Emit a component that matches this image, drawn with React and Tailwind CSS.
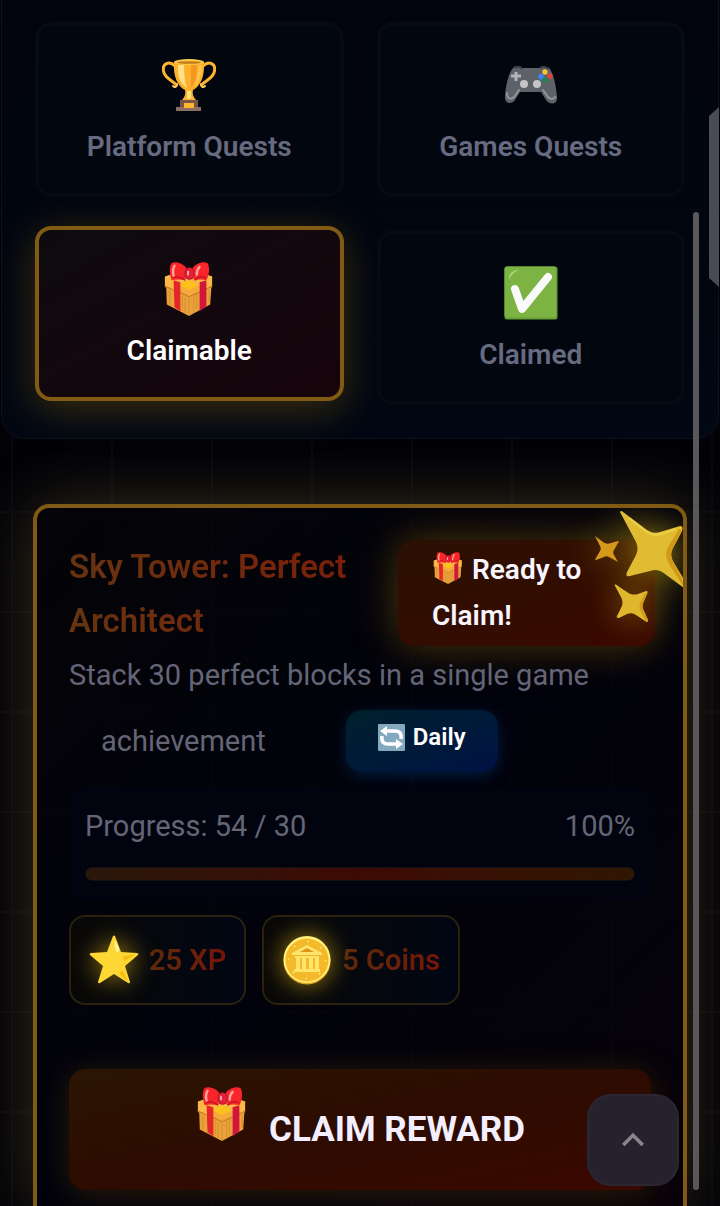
import { useState } from 'react'
import clsx from 'clsx'
import { MdKeyboardArrowUp } from 'react-icons/md'

function TrophyIcon({ className }) {
  return (
    <svg viewBox="0 0 54 54" className={className} aria-hidden="true">
      <path d="M13 8C7 2 0 6 1.500 13c1 7 8 9 13 14" stroke="#fdb52d" strokeWidth="3" fill="none" strokeLinecap="round" />
      <path d="M41 8c6-6 13-2 11.500 5-1 7-8 9-13 14" stroke="#fdb52d" strokeWidth="3" fill="none" strokeLinecap="round" />
      <path d="M15 26c0 3-2 4-4 2M39 26c0 3 2 4 4 2" stroke="#ffcb5c" strokeWidth="2" fill="none" strokeLinecap="round" />
      <path d="M12 4h30c1 13-3 24-11 28-1 3 0 7 3 10H20c3-3 4-7 3-10C15 28 11 17 12 4z" fill="#fdb02c" />
      <path d="M16 7h6c0 10 1 18 3 23-7-4-10-13-9-23z" fill="#ffe084" />
      <path d="M29 7h6c0 10-2 18-6 23z" fill="#f5971c" />
      <path d="M37 7h3c0 10-3 18-8 22 3-7 4-14 5-22z" fill="#ffc44d" />
      <path d="M25 33h4v8h-4z" fill="#ffe37d" />
      <ellipse cx="27" cy="4" rx="15" ry="3" fill="#ffca46" />
      <ellipse cx="27" cy="4.500" rx="12" ry="1.300" fill="#c27a1c" />
      <path d="M18 42h18v7h3v4H14v-4h4z" fill="#795548" />
      <path d="M14 49h25v4H14z" fill="#8d6e63" />
      <path d="M22 45h10v5H22z" fill="#ffb72e" />
    </svg>
  )
}

function GamepadIcon({ className }) {
  return (
    <svg viewBox="0 0 54 54" className={className} aria-hidden="true">
      <path d="M10 9c3-2 7-1 8 1h18c2-2 6-2 9 0 4 4 7 16 8 29 1 8-8 8-11 3l-5-8H16l-5 8c-3 5-11 4-10-4 1-12 4-25 9-29z" fill="#5d6168" />
      <path d="M11 10c3-2 6-1 7 1M36 10c3-2 6-1 8 1" stroke="#3b3e45" strokeWidth="2" fill="none" />
      <path d="M3 35c0 6 4 7 7 4l5-7M51 39c-2 3-5 2-7 0l-5-7" stroke="#92959a" strokeWidth="2" fill="none" strokeLinecap="round" />
      <path d="M12 14v9M7 18h10" stroke="#b3b5b8" strokeWidth="3" />
      <circle cx="20" cy="26" r="4" fill="#c5c5c7" />
      <circle cx="33" cy="26" r="4" fill="#c5c5c7" />
      <circle cx="41" cy="14" r="2.700" fill="#fbc02d" />
      <circle cx="46" cy="18" r="2.700" fill="#db4437" />
      <circle cx="37" cy="18.500" r="2.700" fill="#4285f4" />
      <circle cx="41" cy="22" r="2.500" fill="#128b50" />
    </svg>
  )
}

function GiftIcon({ className }) {
  return (
    <svg viewBox="0 0 54 56" className={className} aria-hidden="true">
      <path d="M3 15l24-7 24 7-2 29-22 12L4 44z" fill="#e9a13a" />
      <path d="M2 15l24-8 25 8v11l-24 9L2 26z" fill="#fbb844" />
      <path d="M17 25l10-6 11 6v5l-11 6-10-6z" fill="#f6a93b" />
      <path d="M17 24l10-5 10 5-10 5z" fill="#fcc21b" />
      <path d="M2 25l9 4M17 31l10 5 11-5M43 29l8-4" stroke="#c77c22" strokeWidth="1.2" fill="none" />
      <path d="M20 35v15M23 37v16M27 37v18M32 35v17M35 33v16M7 30v14M48 30v12" stroke="#cf872c" strokeWidth=".7" />
      <path d="M11 19l7 2v30l-6-4z" fill="#e4262c" />
      <path d="M38 21l7-2v27l-7 5z" fill="#d3153c" />
      <path d="M9 1c5-2 12 1 15 5l-1 13c-4-1-10-1-14 0-2-5-3-14 0-18z" fill="#f9252b" />
      <path d="M46 1c-5-2-12 1-15 5l1 13c4-1 9-1 13 0 3-5 4-14 1-18z" fill="#f9252b" />
      <path d="M10 17c4-3 8-2 13 2M45 17c-4-3-8-2-12 2" stroke="#b81428" strokeWidth="1.2" fill="none" />
      <path d="M12 4c-2 3-2 6-1 10M38 5c-2 2-3 4-3 8" stroke="#ffa49b" strokeWidth="2.500" fill="none" strokeLinecap="round" />
      <rect x="23" y="6" width="9" height="12" rx="4" fill="#e5203a" stroke="#a51226" strokeWidth=".8" />
      <path d="M26 10v3" stroke="#ffaca4" strokeWidth="2" strokeLinecap="round" />
    </svg>
  )
}

function CheckIcon({ className }) {
  return (
    <svg viewBox="0 0 54 54" className={className} aria-hidden="true">
      <rect x=".5" y=".5" width="53" height="53" rx="2.500" fill="#689f38" />
      <rect x=".5" y=".5" width="51.500" height="51" rx="2.500" fill="#7cb342" />
      <path d="M5 14c0-6 3-10 10-10-5 2-8 5-10 10z" fill="#aed581" />
      <path d="M11 23l7 20L44 11" stroke="#fafafa" strokeWidth="8" fill="none" strokeLinecap="round" strokeLinejoin="round" />
    </svg>
  )
}

function StarIcon({ className }) {
  return (
    <svg viewBox="0 0 50 50" className={className} aria-hidden="true">
      <path d="M24 1q1-1 2 0l6 16 16 1q2 0 1 2L36 31l5 16q0 2-2 1L25 39l-14 9q-2 1-2-1l5-16L1 20q-1-2 1-2l16-1z" fill="#fdd835" />
      <path d="M26 5c-1 5 0 9 2 13 2-1 2-3 2-5z" fill="#fff59d" />
      <path d="M46 19l-10 7-3-4zM39 47l-9-9 4-2z" fill="#f4b400" opacity=".7" />
    </svg>
  )
}

function CoinIcon({ className }) {
  return (
    <svg viewBox="0 0 50 50" className={className} aria-hidden="true">
      <circle cx="25" cy="26" r="23.500" fill="#e5a51c" />
      <circle cx="25" cy="24.500" r="23.500" fill="#fff07c" />
      <circle cx="25" cy="25" r="21.500" fill="#f4b92b" />
      <path d="M10 18l15-8 15 8v2H10zM13 21h24v2H13zM14 23h4v12h-4zM20 23h4v12h-4zM27 23h4v12h-4zM33 23h4v12h-4zM12 34h26v3H12z" fill="#ffe36a" />
      <path d="M18 17l7-4 7 4z" fill="#dc9518" />
      <circle cx="25" cy="25" r="18.500" fill="none" stroke="#fff176" strokeWidth="1.500" strokeDasharray="1.500 13" />
    </svg>
  )
}

function RepeatIcon({ className }) {
  return (
    <svg viewBox="0 0 27 27" className={className} aria-hidden="true">
      <rect width="27" height="27" rx="1" fill="#83a9bf" />
      <path d="M23 15c1-6-2-8-6-8H8M4 12c-1 6 2 8 6 8h9" stroke="#fff" strokeWidth="3.500" fill="none" />
      <path d="M9 2v10L2 7zM18 15v10l7-5z" fill="#fff" />
    </svg>
  )
}

function Sparkles({ className }) {
  return (
    <svg viewBox="0 8 103 142" className={className} aria-hidden="true">
      <path d="M40 12q1-2 3 0l20 15c6 5 11 7 17 5l20-6c3 0 3 2 2 5L93 48c-3 6-2 10 1 15l14 23c1 3-1 4-4 2L85 74c-5-4-9-5-15-3l-20 5c-4 1-4-1-3-4l9-17c2-5 2-8 0-13z" fill="#e0bc33" />
      <path d="M99 29L88 47c-3 6-2 11 1 17l14 22 4 2-13-25c-3-5-4-9-1-15l9-17z" fill="#d19a18" />
      <path d="M49 18l14 11c6 5 12 7 18 5l15-5" stroke="#ecd04a" strokeWidth="2" fill="none" />
      <path d="M15 36l8 6c3 2 5 2 8 1l7-2c1 0 1 1 0 2l-4 7c-1 2-1 3 0 5l4 7-9-5c-2-1-3-1-5 0l-8 3c-1 0-1-1 0-2l4-7c1-2 1-3 0-5z" fill="#d6981b" />
      <path d="M35 86c-1-2 1-2 3 0l9 6c4 3 7 3 11 2l8-3c2 0 2 1 1 3l-3 7c-2 4-2 7 0 10l4 9c0 2-1 3-3 1l-9-6c-3-2-6-2-9-1l-8 4c-2 0-3-1-2-2l4-8c2-4 2-7 0-11z" fill="#dfb72c" />
      <path d="M65 93l-4 8c-2 4-2 7 0 11l5 9 2-1-4-9c-2-3-2-6 0-10l3-7z" fill="#d19a18" />
    </svg>
  )
}

const tabs = [
  { id: 'platform', label: 'Platform Quests', icon: TrophyIcon },
  { id: 'games', label: 'Games Quests', icon: GamepadIcon },
  { id: 'claimable', label: 'Claimable', icon: GiftIcon },
  { id: 'claimed', label: 'Claimed', icon: CheckIcon },
]

const rewards = [
  { label: '25 XP', icon: StarIcon },
  { label: '5 Coins', icon: CoinIcon },
]

function QuestTabs({ active, onChange }) {
  return (
    <nav className="mx-px grid grid-cols-2 gap-[33px] rounded-b-3xl border border-t-0 border-[#0c121b] bg-gradient-to-b from-[#01040d] to-[#010713] px-[33px] pt-[22px] pb-[33px]">
      {tabs.map(({ id, label, icon: Icon }) => (
        <button
          key={id}
          type="button"
          onClick={() => onChange(id)}
          className={clsx(
            'flex flex-col items-center gap-5 rounded-2xl border-4 py-8 text-[28px] leading-[29px] font-semibold',
            active === id
              ? '-translate-y-1 border-[#815b13] bg-gradient-to-br from-[#0d0b0e] to-[#17040c] text-white shadow-[0_8px_40px_rgba(130,95,10,0.45)]'
              : 'border-[#060a13] bg-[#01060f] text-[#686b80]'
          )}
        >
          <Icon className="h-[54px] w-[54px]" />
          <span>{label}</span>
        </button>
      ))}
    </nav>
  )
}

function QuestCard() {
  return (
    <article className="relative mx-[33px] mt-[65px] flex-1 overflow-hidden rounded-t-2xl border-4 border-b-0 border-[#815b13] bg-gradient-to-br from-[#050407]/70 via-[#01020d]/70 to-[#0b0209]/70 px-8 pt-8 pb-4 shadow-[0_0_64px_rgba(120,100,50,0.45)]">
      <div className="-mr-1 flex items-start justify-between gap-4">
        <h2 className="bg-gradient-to-r from-[#663310] to-[#7c1a08] bg-clip-text text-[33px] leading-[54px] font-semibold text-transparent">
          Sky Tower: Perfect Architect
        </h2>
        <p className="w-[257px] shrink-0 rounded-2xl bg-gradient-to-br from-[#2b1003] to-[#3a0800] py-[7px] pr-14 pl-[34px] text-[28px] leading-[46px] font-semibold text-[#f8f5ff] shadow-[0_0_40px_rgba(130,90,10,0.6)]">
          <GiftIcon className="mr-2 inline-block h-8 w-8 align-[-5px]" />
          Ready to Claim!
        </p>
      </div>

      <p className="text-[29px] leading-[54px] text-[#646577]">Stack 30 perfect blocks in a single game</p>

      <div className="mt-2 flex items-center gap-12">
        <span className="px-8 text-[29px] leading-[62px] text-[#646577]">achievement</span>
        <span className="flex items-center gap-2 rounded-2xl bg-gradient-to-br from-[#00202c] to-[#001144] px-8 pt-3 pb-5 text-2xl leading-[30px] font-semibold text-white shadow-[0_4px_16px_rgba(0,60,120,0.45)]">
          <RepeatIcon className="h-[27px] w-[27px]" />
          Daily
        </span>
      </div>

      <div className="mt-4 rounded-2xl bg-[#01040e] px-4 pt-4 pb-[18px] text-[29px] leading-[45px] text-[#646577]">
        <div className="flex justify-between">
          <span>Progress: 54 / 30</span>
          <span>100%</span>
        </div>
        <div
          role="progressbar"
          aria-label="Quest progress"
          aria-valuenow={100}
          className="mt-[18px] h-[14px] rounded-full border border-[#141012] bg-gradient-to-r from-[#2a170b] via-[#3d0a04] to-[#301703]"
        />
      </div>

      <ul className="mt-4 flex gap-4">
        {rewards.map(({ label, icon: Icon }) => (
          <li
            key={label}
            className="flex items-center gap-[10px] rounded-2xl border-2 border-[#2b210f] bg-gradient-to-r from-[#090807] to-[#020613] px-[18px] py-[18px] text-[29px] leading-[50px] font-semibold"
          >
            <Icon className="h-[50px] w-[50px] drop-shadow-[0_0_12px_rgba(230,180,20,0.7)]" />
            <span className="bg-gradient-to-r from-[#5c290c] to-[#761408] bg-clip-text text-transparent">{label}</span>
          </li>
        ))}
      </ul>

      <button
        type="button"
        className="mt-16 flex h-[121px] w-full items-center justify-center gap-5 rounded-2xl bg-gradient-to-br from-[#2b1502] via-[#2d0b01] to-[#3b0800] text-[35px] leading-[54px] font-bold text-[#f3efff] shadow-[0_4px_32px_rgba(100,70,10,0.4)]"
      >
        <GiftIcon className="mb-8 h-[54px] w-[54px]" />
        CLAIM REWARD
      </button>

      <Sparkles className="absolute top-0 right-0 h-[142px] w-[103px] drop-shadow-[0_0_16px_rgba(190,160,20,0.7)]" />
    </article>
  )
}

export default function App() {
  const [active, setActive] = useState('claimable')

  return (
    <div className="relative flex min-h-screen flex-col overflow-hidden bg-[#020207] bg-[linear-gradient(#07070d_2px,transparent_2px),linear-gradient(90deg,#07070d_2px,transparent_2px)] bg-size-[100px_100px] bg-position-[11px_11px] font-['Roboto',sans-serif]">
      <QuestTabs active={active} onChange={setActive} />
      <QuestCard />

      {/* floating page controls */}
      <div className="absolute top-[212px] right-[21px] bottom-4 w-[6px] rounded-full bg-[#58585b]" />
      <div className="absolute top-[107px] right-px h-[180px] w-[10px] bg-[#494b55] [clip-path:polygon(0_9px,100%_0,100%_100%,0_171px)]" />
      <button
        type="button"
        aria-label="Back to top"
        className="fixed right-[41px] bottom-5 flex h-[92px] w-[92px] items-center justify-center rounded-3xl border-2 border-[#2a2634] bg-[#26222d] text-[44px] text-[#88868c]"
      >
        <MdKeyboardArrowUp />
      </button>
    </div>
  )
}
